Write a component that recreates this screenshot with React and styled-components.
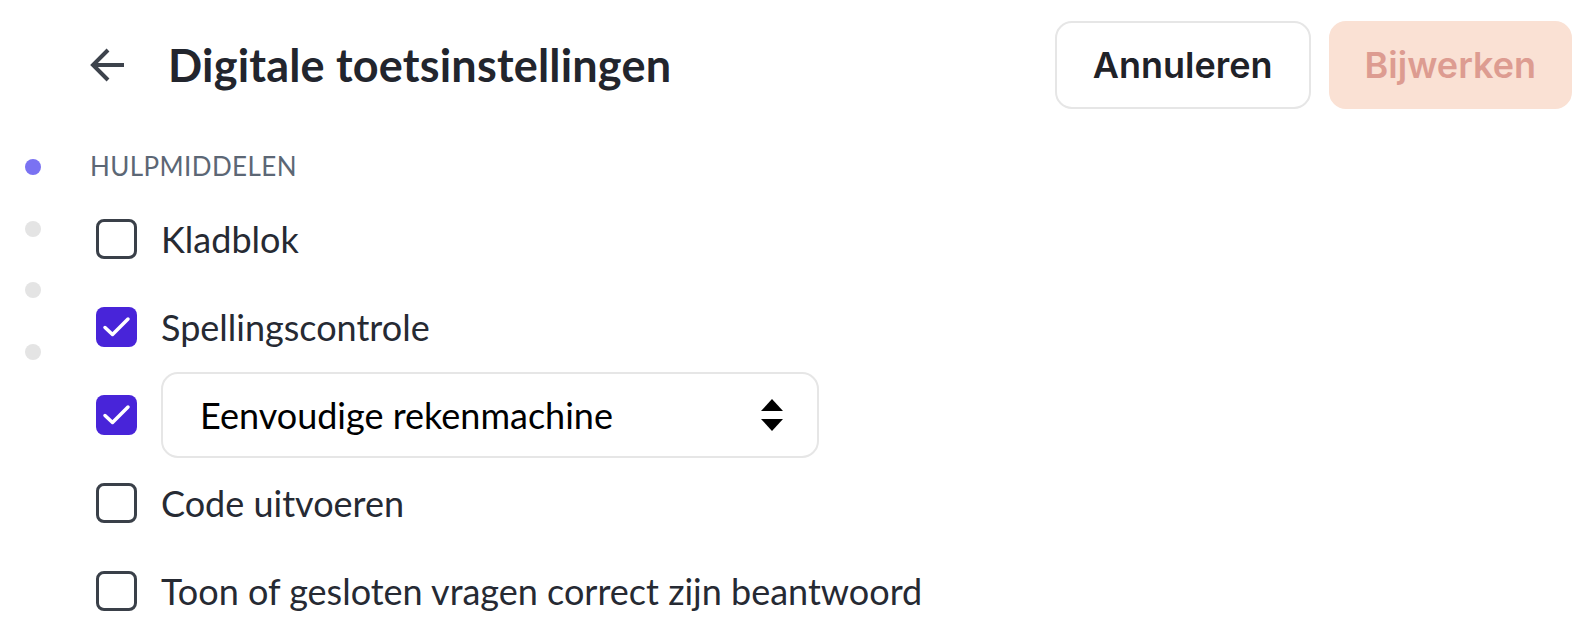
import React, { useState } from "react";
import styled, { createGlobalStyle } from "styled-components";

const GlobalStyle = createGlobalStyle`
  body {
    margin: 0;
    background: #ffffff;
    font-family: Lato, "Noto Sans", sans-serif;
  }
`;

const Page = styled.div`
  width: 1590px;
  height: 630px;
  overflow: hidden;
`;

const Header = styled.header`
  display: flex;
  align-items: center;
  padding: 21px 18px 0 90px;
  height: 88px;
`;

const BackButton = styled.button`
  display: flex;
  align-items: center;
  justify-content: center;
  padding: 0;
  border: none;
  background: none;
  width: 36px;
  height: 36px;
  color: #3d434c;
  cursor: pointer;
`;

const Title = styled.h1`
  margin: 0 0 0 42px;
  font-size: 45px;
  font-weight: 700;
  color: #22252d;
  letter-spacing: 0.2px;
`;

const Actions = styled.div`
  margin-left: auto;
  display: flex;
  gap: 18px;
`;

const Button = styled.button`
  height: 88px;
  padding: 0 ${(p) => (p.primary ? "34px" : "36px")};
  border-radius: 17px;
  font-family: Inter, sans-serif;
  font-size: 36px;
  font-weight: 600;
  border: 2px solid ${(p) => (p.primary ? "#fae1d4" : "#e6e6e6")};
  background: ${(p) => (p.primary ? "#fae1d4" : "#ffffff")};
  color: ${(p) => (p.primary ? "#dd9c91" : "#1f2228")};
  cursor: ${(p) => (p.primary ? "default" : "pointer")};
`;

const Body = styled.div`
  display: flex;
`;

const Rail = styled.nav`
  width: 90px;
  padding: 50px 0 0 25px;
  box-sizing: border-box;
  display: flex;
  flex-direction: column;
  gap: 45.5px;
`;

const Dot = styled.span`
  width: 16px;
  height: 16px;
  border-radius: 50%;
  background: ${(p) => (p.active ? "#7a72f2" : "#e4e4e4")};
`;

const Content = styled.section`
  display: flex;
  flex-direction: column;
  padding-top: 37px;
`;

const SectionLabel = styled.h2`
  margin: 0 0 9px;
  height: 40px;
  line-height: 40px;
  font-size: 26px;
  font-weight: 400;
  color: #5c6775;
  letter-spacing: 0.4px;
`;

const Row = styled.div`
  display: flex;
  align-items: center;
  height: 88px;
  padding-left: 6px;
  gap: 24px;
`;

const Box = styled.span`
  flex: none;
  display: flex;
  align-items: center;
  justify-content: center;
  width: 41px;
  height: 40px;
  box-sizing: border-box;
  border-radius: 8px;
  border: ${(p) => (p.checked ? "none" : "3.5px solid #3a4049")};
  background: ${(p) => (p.checked ? "#4824d9" : "#ffffff")};
  cursor: pointer;
`;

const Label = styled.span`
  font-size: 36px;
  color: #262a33;
  cursor: pointer;
`;

const Select = styled.div`
  display: flex;
  align-items: center;
  width: 658px;
  height: 86px;
  box-sizing: border-box;
  padding: 0 34px 0 37px;
  border: 2px solid #e6e6e6;
  border-radius: 17px;
  font-size: 36px;
  color: #000000;
`;

const SelectArrows = styled.svg`
  margin-left: auto;
`;

const Check = () => (
  <svg width="41" height="40" viewBox="0 0 41 40">
    <path
      d="M9 20.5 L16.5 27.5 L32 12"
      fill="none"
      stroke="#ffffff"
      strokeWidth="3.5"
      strokeLinecap="round"
      strokeLinejoin="round"
    />
  </svg>
);

const Checkbox = ({ checked, onToggle }) => (
  <Box checked={checked} onClick={onToggle}>
    {checked && <Check />}
  </Box>
);

const options = [
  { id: "kladblok", label: "Kladblok", checked: false },
  { id: "spelling", label: "Spellingscontrole", checked: true },
  { id: "rekenmachine", label: "Eenvoudige rekenmachine", checked: true, select: true },
  { id: "code", label: "Code uitvoeren", checked: false },
  { id: "toon", label: "Toon of gesloten vragen correct zijn beantwoord", checked: false },
];

export default function App() {
  const [items, setItems] = useState(options);

  const toggle = (id) =>
    setItems(items.map((it) => (it.id === id ? { ...it, checked: !it.checked } : it)));

  return (
    <Page>
      <GlobalStyle />
      <Header>
        <BackButton aria-label="Terug">
          <svg width="36" height="36" viewBox="0 0 36 36">
            <path
              d="M34 18 H3 M18 3 L3 18 L18 33"
              fill="none"
              stroke="currentColor"
              strokeWidth="4"
              strokeLinejoin="miter"
            />
          </svg>
        </BackButton>
        <Title>Digitale toetsinstellingen</Title>
        <Actions>
          <Button>Annuleren</Button>
          <Button primary disabled>
            Bijwerken
          </Button>
        </Actions>
      </Header>
      <Body>
        <Rail>
          <Dot active />
          <Dot />
          <Dot />
          <Dot />
        </Rail>
        <Content>
          <SectionLabel>HULPMIDDELEN</SectionLabel>
          {items.map((it) => (
            <Row key={it.id}>
              <Checkbox checked={it.checked} onToggle={() => toggle(it.id)} />
              {it.select ? (
                <Select>
                  {it.label}
                  <SelectArrows width="22" height="34" viewBox="0 0 22 34">
                    <path d="M11 1 L22 13 H0 Z" fill="#000" />
                    <path d="M0 21 H22 L11 33 Z" fill="#000" />
                  </SelectArrows>
                </Select>
              ) : (
                <Label onClick={() => toggle(it.id)}>{it.label}</Label>
              )}
            </Row>
          ))}
        </Content>
      </Body>
    </Page>
  );
}
